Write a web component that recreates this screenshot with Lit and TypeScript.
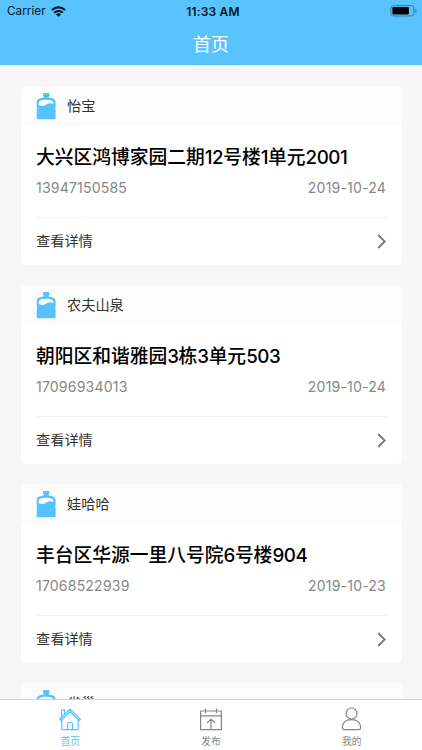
import { LitElement, html, css, svg } from "lit";
import { customElement, property } from "lit/decorators.js";

interface Order {
  brand: string;
  address: string;
  phone: string;
  date: string;
}

const ORDERS: Order[] = [
  { brand: "怡宝", address: "大兴区鸿博家园二期12号楼1单元2001", phone: "13947150585", date: "2019-10-24" },
  { brand: "农夫山泉", address: "朝阳区和谐雅园3栋3单元503", phone: "17096934013", date: "2019-10-24" },
  { brand: "娃哈哈", address: "丰台区华源一里八号院6号楼904", phone: "17068522939", date: "2019-10-23" },
  { brand: "雀巢", address: "", phone: "", date: "" },
];

@customElement("status-bar")
class StatusBar extends LitElement {
  static styles = css`
    :host { display: grid; grid-template-columns: 1fr auto 1fr; align-items: center; height: 22px; padding: 0 5px 0 7px; color: #06151e; box-sizing: border-box; }
    .left { display: flex; align-items: center; gap: 5px; font-size: 11.8px; }
    .time { font-size: 12px; font-weight: 600; letter-spacing: 0.2px; padding-left: 2px; }
    .battery { justify-self: end; }
    svg { display: block; }
  `;
  render() {
    return html`
      <div class="left">
        <span>Carrier</span>
        <svg width="15" height="11" viewBox="0 0 15 11" fill="none" stroke="#06151e" stroke-width="2.1">
          <path d="M1 4.1C4.7.5 10.3.5 14 4.1" />
          <path d="M3.2 6.8c2.5-2.3 6.1-2.3 8.6 0" />
          <path d="M7.5 10.8L4.9 8.3c1.5-1.3 3.7-1.3 5.2 0z" fill="#06151e" stroke="none" />
        </svg>
      </div>
      <div class="time">11:33 AM</div>
      <svg class="battery" width="27" height="12" viewBox="0 0 27 12">
        <rect x=".9" y=".6" width="23" height="10.4" rx="2.6" fill="none" stroke="#3b7a9b" stroke-width="1" />
        <rect x="2.4" y="2" width="16.5" height="7.6" rx="1" fill="#000" />
        <path d="M25.3 4v4c.8-.3 1.3-1.1 1.3-2s-.5-1.7-1.3-2z" fill="#3b7a9b" />
      </svg>
    `;
  }
}

@customElement("order-card")
class OrderCard extends LitElement {
  @property({ attribute: false }) order!: Order;
  static styles = css`
    :host { display: block; height: 179px; border-radius: 5px; overflow: hidden; background: #fff; flex: none; }
    .head { display: flex; align-items: center; height: 40px; padding: 0 15px; gap: 11px; background: #fcfcfc; font-size: 14.2px; line-height: 20px; color: #333; }
    .bottle { display: block; }
    .brand { padding-bottom: 1px; }
    .body { height: 92px; margin: 0 15px; border-bottom: 1px solid #f3f3f3; box-sizing: border-box; padding-top: 19px; }
    .address { font-size: 18.75px; font-weight: 500; line-height: 26px; color: #000; white-space: nowrap; }
    .num { letter-spacing: -0.45px; }
    .meta { display: flex; justify-content: space-between; font-size: 14.1px; letter-spacing: 0.16px; line-height: 20px; margin: 7px 0.5px 0 0; color: #888; }
    .foot { display: flex; align-items: center; justify-content: space-between; height: 47px; padding: 0 16px 0 15px; font-size: 14.2px; line-height: 20px; color: #333; }
    .more { padding-bottom: 2px; }
    .arrow { display: block; }
  `;
  render() {
    const o = this.order;
    const parts = o.address.split(/(\d+)/).filter(Boolean);
    return html`
      <div class="head">
        <svg class="bottle" width="20" height="27" viewBox="0 0 20 27">
          <path fill="#56c2ff" fill-rule="evenodd" d="M7.6 0h5.2q.6 0 .6.6v2q0 .6-.6.6v1.200C16 4.600 19.600 6 19.600 8.800V14.600q0 .7-.7 1.100.7.5.7 1.100V25.200q0 1-1 1H1.700q-1 0-1-1V16.800q0-.6.7-1.100-.7-.4-.7-1.100V8.800C.7 6 4.400 4.600 7.600 4.400V3.200q-.6 0-.6-.6v-2q0-.6.6-.6zM2.700 9.200v2.900q2.600 1.500 5.300.7c2-.6 2.500-2.100 4.500-2.400q2.500-.2 4.700.5V8.900Q16.600 7.400 13.500 6.900 10 6.500 6.500 6.900 3.300 7.400 2.700 9.200z" />
        </svg>
        <span class="brand">${o.brand}</span>
      </div>
      <div class="body">
        <div class="address">${parts.map((p) => (/\d/.test(p) ? html`<span class="num">${p}</span>` : p))}</div>
        <div class="meta"><span>${o.phone}</span><span>${o.date}</span></div>
      </div>
      <div class="foot">
        <span class="more">查看详情</span>
        <svg class="arrow" width="9" height="15" viewBox="0 0 9 15" fill="none" stroke="#777" stroke-width="1.8">
          <path d="M1.2 1l6.5 6.5L1.2 14" />
        </svg>
      </div>
    `;
  }
}

const TABS = [
  {
    label: "首页",
    active: true,
    icon: svg`<path d="M1.6 12.2L12 2.2l10.4 10-1.3 1.3L12 4.8l-9.1 8.7z"/><path d="M3.8 12.8v8.6q0 1.3 1.3 1.3h13.8q1.3 0 1.3-1.3v-8.6M3.6 10.100V3.100h3v4M9.700 22.500v-5.800q0-1.200 1.200-1.200h2.300q1.200 0 1.200 1.200v5.800"/>`,
  },
  {
    label: "发布",
    active: false,
    icon: svg`<path d="M1.6 4h20.8v18.6H1.6zM1.6 8.8h20.8M6.5 1.5v4.7M17.5 1.5v4.7M12 22.5V12.3M7.9 16.1L12 12.1l4.100 4"/>`,
  },
  {
    label: "我的",
    active: false,
    icon: svg`<circle cx="11.5" cy="6.5" r="5.5"/><path d="M2.4 20.7c0-3.4 1.9-6.3 4.9-7.5q4.2-1.1 8.4 0c3 1.2 4.9 4.1 4.9 7.500q0 1.900-1.800 1.900H4.200q-1.800 0-1.800-1.900z"/>`,
  },
];

@customElement("tab-bar")
class TabBar extends LitElement {
  static styles = css`
    :host { display: grid; grid-template-columns: repeat(3, 1fr); height: 51px; box-sizing: border-box; border-top: 1px solid #d4d4d4; background: #fff; }
    .tab { display: flex; flex-direction: column; align-items: center; padding-top: 7px; gap: 4px; color: #858585; font-size: 9.7px; line-height: 14px; }
    .active { color: #56c2ff; }
    svg { display: block; fill: none; stroke: currentColor; stroke-width: 1.2; stroke-linejoin: round; }
  `;
  render() {
    return TABS.map(
      (t) => html`<div class="tab ${t.active ? "active" : ""}">
        <svg width="24" height="24" viewBox="0 0 24 24">${t.icon}</svg>
        <span>${t.label}</span>
      </div>`
    );
  }
}

@customElement("app-root")
class AppRoot extends LitElement {
  static styles = css`
    :host { display: flex; flex-direction: column; height: 750px; overflow: hidden; background: #f6f6f6; font-family: Inter, "Noto Sans CJK SC", sans-serif; }
    .nav { background: #59c3fd; height: 65px; flex: none; border-bottom: 1px solid #d8effc; }
    .title { height: 41px; display: flex; align-items: center; justify-content: center; color: #fff; font-size: 18px; }
    .list { flex: 1; min-height: 0; overflow: hidden; display: flex; flex-direction: column; gap: 20px; padding: 20px 20.5px 0 21px; }
    tab-bar { flex: none; }
  `;
  render() {
    return html`
      <header class="nav">
        <status-bar></status-bar>
        <div class="title">首页</div>
      </header>
      <main class="list">${ORDERS.map((o) => html`<order-card .order=${o}></order-card>`)}</main>
      <tab-bar></tab-bar>
    `;
  }
}
